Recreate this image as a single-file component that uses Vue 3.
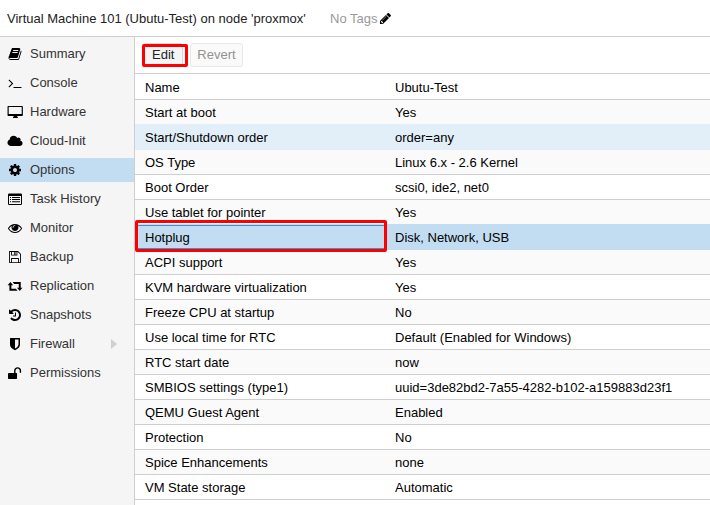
<script setup>
const menu = [
  { icon: 'book', label: 'Summary' },
  { icon: 'terminal', label: 'Console' },
  { icon: 'desktop', label: 'Hardware' },
  { icon: 'cloud', label: 'Cloud-Init' },
  { icon: 'cog', label: 'Options', active: true },
  { icon: 'list', label: 'Task History' },
  { icon: 'eye', label: 'Monitor' },
  { icon: 'floppy', label: 'Backup' },
  { icon: 'retweet', label: 'Replication' },
  { icon: 'history', label: 'Snapshots' },
  { icon: 'shield', label: 'Firewall', expandable: true },
  { icon: 'unlock', label: 'Permissions' },
]

const rows = [
  { name: 'Name', value: 'Ubutu-Test' },
  { name: 'Start at boot', value: 'Yes' },
  { name: 'Start/Shutdown order', value: 'order=any', state: 'hover' },
  { name: 'OS Type', value: 'Linux 6.x - 2.6 Kernel' },
  { name: 'Boot Order', value: 'scsi0, ide2, net0' },
  { name: 'Use tablet for pointer', value: 'Yes' },
  { name: 'Hotplug', value: 'Disk, Network, USB', state: 'selected' },
  { name: 'ACPI support', value: 'Yes' },
  { name: 'KVM hardware virtualization', value: 'Yes' },
  { name: 'Freeze CPU at startup', value: 'No' },
  { name: 'Use local time for RTC', value: 'Default (Enabled for Windows)' },
  { name: 'RTC start date', value: 'now' },
  { name: 'SMBIOS settings (type1)', value: 'uuid=3de82bd2-7a55-4282-b102-a159883d23f1' },
  { name: 'QEMU Guest Agent', value: 'Enabled' },
  { name: 'Protection', value: 'No' },
  { name: 'Spice Enhancements', value: 'none' },
  { name: 'VM State storage', value: 'Automatic' },
]

const icons = {
  book: 'M1703 478q40 57 18 129l-275 906q-19 64-76.5 107.5t-122.5 43.5h-923q-77 0-148.5-53.5t-99.5-131.5q-24-67-2-127 0-4 3-27t4-37q1-8-3-21.5t-3-19.5q2-11 8-21t16.5-23.5 16.5-23.5q23-38 45-91.5t30-91.5q3-10 .5-30t-.5-28q3-11 17-28t17-23q21-36 42-92t25-90q1-9-2.5-32t.5-28q4-13 22-30.5t22-22.5q19-26 42.5-84.5t27.5-96.5q1-8-3-25.5t-2-26.5q2-8 9-18t18-23 17-21q8-12 16.5-30.5t15-35 16-36 19.5-32 26.5-23.5 36-11.5 47.5 5.5l-1 3q38-9 51-9h761q74 0 114 56t18 130l-274 906q-36 119-71.5 153.5t-128.5 34.5h-869q-27 0-38 15-11 16-1 43 24 70 144 70h923q29 0 56-15.5t35-41.5l300-987q7-22 5-57 38 15 59 43zm-1064 2q-4 13 2 22.5t20 9.5h608q13 0 25.5-9.5t16.5-22.5l21-64q4-13-2-22.5t-20-9.5h-608q-13 0-25.5 9.5t-16.5 22.5zm-83 256q-4 13 2 22.5t20 9.5h608q13 0 25.5-9.5t16.5-22.5l21-64q4-13-2-22.5t-20-9.5h-608q-13 0-25.5 9.5t-16.5 22.5z',
  terminal: 'M649 983l-466 466q-10 10-23 10t-23-10l-50-50q-10-10-10-23t10-23l393-393-393-393q-10-10-10-23t10-23l50-50q10-10 23-10t23 10l466 466q10 10 10 23t-10 23zm1079 457v64q0 14-9 23t-23 9h-960q-14 0-23-9t-9-23v-64q0-14 9-23t23-9h960q14 0 23 9t9 23z',
  desktop: 'M40 120H1800Q1900 120 1900 220V1300Q1900 1400 1800 1400H1160Q1170 1490 1260 1540V1664H640V1540Q730 1490 740 1400H40Q-60 1400 -60 1300V220Q-60 120 40 120zM90 256V1150H1750V256z',
  cloud: 'M1860 1180Q1860 1340 1750 1440T1480 1550H400Q210 1550 70 1420T-70 1120Q-70 980 10 865T220 700Q215 480 365 345T700 210Q860 210 985 295T1170 520Q1250 455 1350 455 1460 455 1540 535T1615 725Q1615 790 1575 850 1700 880 1780 970T1860 1180z',
  cog: 'M1152 896q0-106-75-181t-181-75-181 75-75 181 75 181 181 75 181-75 75-181zm512-109v222q0 12-8 23t-20 13l-185 28q-19 54-39 91 35 50 107 138 10 12 10 25t-9 23q-27 37-99 108t-94 71q-12 0-26-9l-138-108q-44 23-91 38-16 136-29 186-7 28-36 28h-222q-14 0-24.5-8.5t-11.5-21.5l-28-184q-49-16-90-37l-141 107q-10 9-25 9-14 0-25-11-126-114-165-168-7-10-7-23 0-12 8-23 15-21 51-66.5t54-70.5q-27-50-41-99l-183-27q-13-2-21-12.5t-8-23.5v-222q0-12 8-23t19-13l186-28q14-46 39-92-40-57-107-138-10-12-10-24 0-10 9-23 26-36 98.5-107.5t94.5-71.5q13 0 26 10l138 107q44-23 91-38 16-136 29-186 7-28 36-28h222q14 0 24.5 8.5t11.5 21.5l28 184q49 16 90 37l142-107q9-9 24-9 13 0 25 10 129 119 165 170 7 8 7 22 0 12-8 23-15 21-51 66.5t-54 70.5q26 50 41 98l183 28q13 2 21 12.5t8 23.5z',
  list: 'M160 192H1632Q1792 192 1792 352V1504Q1792 1664 1632 1664H160Q0 1664 0 1504V352Q0 192 160 192zM128 512V1536H1664V512zM256 640H384V768H256zM512 640H1536V768H512zM256 896H384V1024H256zM512 896H1536V1024H512zM256 1190H384V1318H256zM512 1190H1536V1318H512z',
  eye: 'M1664 960q-152-236-381-353 61 104 61 225 0 185-131.5 316.5t-316.5 131.5-316.5-131.5-131.5-316.5q0-121 61-225-229 117-381 353 133 205 333.5 326.5t434.5 121.5 434.5-121.5 333.5-326.5zm-720-384q0-20-14-34t-34-14q-125 0-214.5 89.5t-89.5 214.5q0 20 14 34t34 14 34-14 14-34q0-86 61-147t147-61q20 0 34-14t14-34zm848 384q0 34-20 69-140 230-376.5 368.5t-499.5 138.5-499.5-139-376.5-368q-20-35-20-69t20-69q140-229 376.5-368t499.5-139 499.5 139 376.5 368q20 35 20 69z',
  floppy: 'M210 128H1290L1664 502V1582Q1664 1664 1582 1664H210Q128 1664 128 1582V210Q128 128 210 128zM240 240V1552H400V1024H1392V1552H1552V550L1242 240H1200V704H400V240zM512 240V592H800V240zM960 240V592H1088V240zM512 1136V1552H1280V1136z',
  retweet: 'M310 380L660 800H430V1260H1010L1220 1510H180V800H-50zM1500 1540L1150 1120H1380V640H800L590 390H1630V1120H1850z',
  history: 'M1664 896q0 156-61 298t-164 245-245 164-298 61q-172 0-327-72.5t-264-204.5q-7-10-6.5-22.5t8.5-20.5l137-138q10-9 25-9 16 2 23 12 73 95 179 147t225 52q104 0 198.5-40.5t163.5-109.5 109.5-163.5 40.5-198.5-40.5-198.5-109.5-163.5-163.5-109.5-198.5-40.5q-98 0-188 35.5t-160 101.5l137 138q31 30 14 69-17 40-59 40h-448q-26 0-45-19t-19-45v-448q0-42 40-59 39-17 69 14l130 129q107-101 244.5-156.5t284.5-55.5q156 0 298 61t245 164 164 245 61 298zm-640-288v448q0 14-9 23t-23 9h-320q-14 0-23-9t-9-23v-64q0-14 9-23t23-9h224v-352q0-14 9-23t23-9h64q14 0 23 9t9 23z',
  shield: 'M320 128H1472Q1536 128 1536 192V960Q1536 1400 896 1700 256 1400 256 960V192Q256 128 320 128zM896 320V1480Q1344 1230 1344 960V320z',
  unlock: 'M100 896H780V600Q780 420 910 290T1230 160Q1420 160 1550 290T1680 600V860H1500V600Q1500 490 1420 410T1230 330Q1120 330 1040 410T960 600V896H1060Q1160 896 1160 990V1570Q1160 1664 1060 1664H100Q0 1664 0 1570V990Q0 896 100 896z',
  pencil: 'M491 1536l91-91-235-235-91 91v107h128v128h107zm523-928q0-22-22-22-10 0-17 7l-542 542q-7 7-7 17 0 22 22 22 10 0 17-7l542-542q7-7 7-17zm-54-192l416 416-832 832h-416v-416zm683 96q0 53-37 90l-166 166-416-416 166-165q36-38 90-38 53 0 91 38l235 234q37 39 37 91z',
}
</script>

<template>
  <div class="panel">
    <header class="title">
      <span class="title-text">Virtual Machine 101 (Ubutu-Test) on node 'proxmox'</span>
      <span class="tags">No Tags</span>
      <svg class="icon pencil" viewBox="0 0 1792 1792"><path :d="icons.pencil" /></svg>
    </header>
    <div class="body">
      <nav class="menu">
        <a v-for="m in menu" :key="m.label" class="item" :class="{ active: m.active }">
          <svg class="icon" viewBox="0 0 1792 1792"><path fill-rule="evenodd" :d="icons[m.icon]" /></svg>
          <span>{{ m.label }}</span>
          <i v-if="m.expandable" class="arrow"></i>
        </a>
      </nav>
      <main class="content">
        <div class="toolbar">
          <div class="edit-wrap">
            <button class="btn">Edit</button>
            <div class="mark mark-edit"></div>
          </div>
          <button class="btn disabled">Revert</button>
        </div>
        <div class="grid">
          <div v-for="r in rows" :key="r.name" class="row" :class="r.state">
            <div class="cell name">{{ r.name }}</div>
            <div class="cell">{{ r.value }}</div>
            <div v-if="r.state === 'selected'" class="mark mark-row"></div>
          </div>
        </div>
      </main>
    </div>
  </div>
</template>

<style>
body {
  overflow: hidden;
}
</style>

<style scoped>
.panel {
  height: 505px;
  display: flex;
  flex-direction: column;
  background: #fff;
  color: #000;
  font: 13px/20px "Liberation Sans", Arial, sans-serif;
  overflow: hidden;
}
.title {
  height: 36px;
  flex: none;
  display: flex;
  align-items: center;
  padding-left: 7px;
  color: #222;
  border-bottom: 1px solid #cfcfcf;
}
.title-text {
  width: 323px;
  padding-top: 1px;
  white-space: nowrap;
}
.tags {
  width: 49px;
  padding-top: 1px;
  white-space: nowrap;
  color: #999;
}
.icon {
  width: 14px;
  height: 14px;
  flex: none;
  overflow: visible;
  fill: #000;
}
.icon.pencil {
  width: 13px;
  height: 13px;
}
.body {
  flex: 1;
  min-height: 0;
  display: flex;
}
.menu {
  width: 134px;
  flex: none;
  padding-top: 5px;
  display: flex;
  flex-direction: column;
  gap: 5px;
  background: #f5f5f5;
  border-right: 1px solid #cfcfcf;
  color: #333;
}
.item {
  height: 24px;
  display: flex;
  align-items: center;
  gap: 8px;
  padding: 0 17px 0 8px;
}
.item.active {
  background: #c2ddf2;
}
.arrow {
  margin-left: auto;
  border: 5px solid transparent;
  border-left: 6px solid #cfcfcf;
  border-right: 0;
}
.content {
  flex: 1;
  min-width: 0;
}
.toolbar {
  height: 36px;
  display: flex;
  gap: 7px;
  padding: 6px 0 0 8px;
  box-sizing: border-box;
}
.edit-wrap {
  position: relative;
}
.btn {
  box-sizing: border-box;
  height: 24px;
  padding: 0 8px;
  font: inherit;
  line-height: 22px;
  color: #222;
  background: #f5f5f5;
  border: 1px solid #d8d8d8;
  border-radius: 3px;
}
.edit-wrap .btn {
  width: 40px;
}
.btn.disabled {
  width: 53px;
  padding: 0;
  background: #fafafa;
  border-color: #e8e8e8;
  color: #919191;
}
.mark {
  position: absolute;
  box-sizing: border-box;
  border: 3px solid #f00;
  border-radius: 2px;
}
.mark-edit {
  left: -1px;
  top: 1px;
  width: 46px;
  height: 23px;
}
.grid {
  border-top: 1px solid #cfcfcf;
}
.row {
  height: 24px;
  display: flex;
  border-bottom: 1px solid #cfcfcf;
}
.row:first-child {
  padding-top: 1px;
}
.row:nth-child(even) {
  background: #fafafa;
}
.row.hover {
  background: #e2eff9;
  border-color: #e2eff9;
}
.row:has(+ .hover) {
  border-color: #e2eff9;
}
.row.selected {
  position: relative;
  z-index: 1;
  background: #c2ddf2;
  border-color: #c2ddf2;
}
.row:has(+ .selected) {
  border-color: #c2ddf2;
}
.cell {
  padding: 3px 10px 1px;
  white-space: nowrap;
}
.name {
  box-sizing: border-box;
  width: 250px;
  flex: none;
}
.selected .name {
  height: 24px;
  box-shadow: inset 0 0 0 1px #3892d4;
}
.mark-row {
  left: 0;
  top: -5px;
  width: 252px;
  height: 32px;
}
</style>
